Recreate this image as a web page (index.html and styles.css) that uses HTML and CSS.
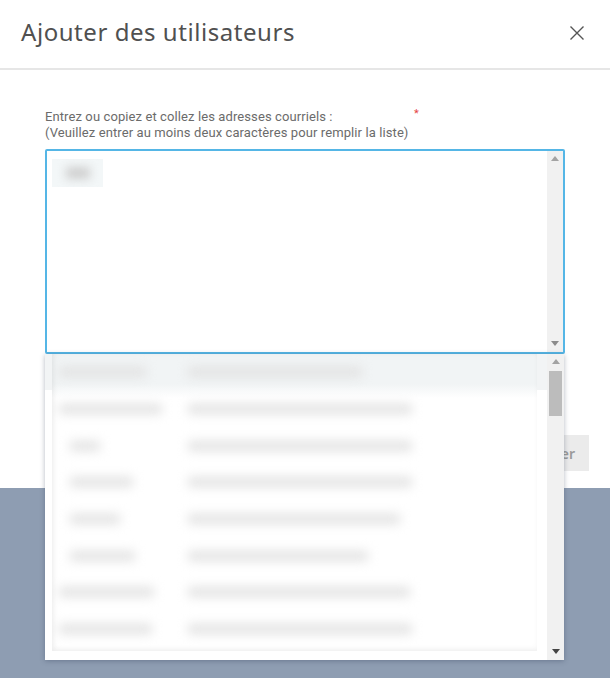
FILE: index.html
```html
<!DOCTYPE html>
<html lang="fr">
<head>
    <meta charset="UTF-8">
    <meta name="viewport" content="width=device-width, initial-scale=1.0">
    <title>Ajouter des utilisateurs</title>
    <link rel="stylesheet" href="styles.css">
</head>
<body>
    <div class="modal">
        <div class="modal-header">
            <h1 class="modal-title">Ajouter des utilisateurs</h1>
            <svg class="close-icon" width="16" height="16" viewBox="0 0 16 16">
                <path d="M1.5 1.5 L14.5 14.5 M14.5 1.5 L1.5 14.5" stroke="#555" stroke-width="1.4" fill="none"/>
            </svg>
        </div>
        <div class="modal-body">
            <div class="field-label">
                <span class="label-line">Entrez ou copiez et collez les adresses courriels :<span class="required">*</span></span>
                <span class="label-line">(Veuillez entrer au moins deux caractères pour remplir la liste)</span>
            </div>
            <div class="email-box">
                <div class="email-content">
                    <div class="chip"><span class="chip-blur"></span></div>
                </div>
                <div class="scrollbar">
                    <span class="arrow-up"></span>
                    <span class="arrow-down"></span>
                </div>
            </div>
        </div>
        <div class="modal-footer">
            <button class="add-btn">Ajouter</button>
        </div>

        <div class="dropdown">
            <div class="user-list">
                <div class="user-row"><span class="blur-bar w87"></span><span class="blur-bar mail w174"></span></div>
                <div class="user-row"><span class="blur-bar w103"></span><span class="blur-bar mail w224"></span></div>
                <div class="user-row"><span class="blur-bar w30 indent"></span><span class="blur-bar mail w224"></span></div>
                <div class="user-row"><span class="blur-bar w63 indent"></span><span class="blur-bar mail w224"></span></div>
                <div class="user-row"><span class="blur-bar w50 indent"></span><span class="blur-bar mail w212"></span></div>
                <div class="user-row"><span class="blur-bar w65 indent"></span><span class="blur-bar mail w180"></span></div>
                <div class="user-row"><span class="blur-bar w95"></span><span class="blur-bar mail w222"></span></div>
                <div class="user-row"><span class="blur-bar w93"></span><span class="blur-bar mail w224"></span></div>
            </div>
            <div class="scrollbar list-scrollbar">
                <span class="arrow-up"></span>
                <span class="thumb"></span>
                <span class="arrow-down dark"></span>
            </div>
        </div>
    </div>
    <div class="backdrop"></div>
</body>
</html>
```

FILE: styles.css
```css
html, body {
    height: 100%;
}

body {
    margin: 0;
    display: flex;
    flex-direction: column;
    overflow: hidden;
    font-family: 'Noto Sans', Arial, sans-serif;
    background-color: #8e9db2;
}

.modal {
    height: 488px;
    flex-shrink: 0;
    display: flex;
    flex-direction: column;
    position: relative;
    background-color: #fff;
}

.backdrop {
    flex: 1;
    background-color: #8e9db2;
}

.modal-header {
    height: 62px;
    padding: 0 25px 6px 21px;
    display: flex;
    justify-content: space-between;
    align-items: center;
    border-bottom: 2px solid #e6e6e6;
}

.modal-title {
    margin: 0;
    font-size: 24px;
    font-weight: 400;
    letter-spacing: 0.55px;
    color: #505050;
}

.close-icon {
    display: block;
    margin-top: 4px;
}

.modal-body {
    padding: 39px 45px 0;
}

.field-label {
    display: flex;
    flex-direction: column;
    font-family: Roboto, Arial, sans-serif;
    font-size: 13px;
    line-height: 16px;
    letter-spacing: 0.1px;
    color: #6b6b6b;
    margin-bottom: 8px;
}

.label-line {
    display: block;
    position: relative;
}

.required {
    position: absolute;
    left: 369px;
    top: -3px;
    color: #e54545;
    font-size: 11px;
}

.email-box {
    height: 205px;
    box-sizing: border-box;
    display: flex;
    border: 2px solid #55b6e6;
    border-radius: 2px;
    background-color: #fff;
}

.email-content {
    flex: 1;
    padding: 8px 5px;
}

.chip {
    width: 51px;
    height: 28px;
    background-color: #f3f7f8;
    display: flex;
    align-items: center;
    justify-content: center;
    overflow: hidden;
}

.chip-blur {
    width: 24px;
    height: 12px;
    background-color: #cfcfcf;
    filter: blur(5px);
}

.scrollbar {
    width: 16px;
    background-color: #f1f1f1;
    display: flex;
    flex-direction: column;
    align-items: center;
    padding: 5px 0 6px;
    box-sizing: border-box;
}

.arrow-up,
.arrow-down {
    width: 0;
    height: 0;
    border-left: 4px solid transparent;
    border-right: 4px solid transparent;
}

.arrow-up {
    border-bottom: 5px solid #a3a3a3;
}

.arrow-down {
    margin-top: auto;
    border-top: 5px solid #8c8c8c;
}

.arrow-down.dark {
    border-top-color: #444;
}

.thumb {
    width: 13px;
    height: 45px;
    margin-top: 7px;
    background-color: #bcbcbc;
}

.modal-footer {
    display: flex;
    justify-content: flex-end;
    padding: 81px 21px 0 0;
}

.add-btn {
    height: 36px;
    width: 84px;
    padding: 0 14px;
    border: none;
    background-color: #ebebeb;
    color: #9a9a9a;
    font-family: inherit;
    font-size: 14px;
    font-weight: 600;
    text-align: right;
}

.dropdown {
    position: absolute;
    left: 45px;
    top: 354px;
    width: 519px;
    height: 306px;
    display: flex;
    background: linear-gradient(#f2f4f5 36px, #fff 36px);
    box-shadow: 0 1px 5px rgba(40, 55, 80, 0.35);
}

.user-list {
    flex: 1;
    display: flex;
    flex-direction: column;
    align-self: flex-start;
    margin: 0 10px 0 7px;
    height: 297px;
    overflow: hidden;
    background: linear-gradient(#f1f4f5 30px, #fff 44px);
    box-shadow: inset 0 -3px 5px rgba(0, 0, 0, 0.04), inset 3px 0 5px rgba(0, 0, 0, 0.04);
}

.user-row {
    height: 36.7px;
    flex-shrink: 0;
    display: flex;
    align-items: center;
    position: relative;
}

.blur-bar {
    height: 10px;
    background-color: #e2e2e2;
    filter: blur(5.5px);
    position: absolute;
    left: 7px;
}

.blur-bar.indent {
    left: 18px;
}

.blur-bar.mail {
    left: 136px;
}

.w30 { width: 30px; }
.w50 { width: 50px; }
.w63 { width: 63px; }
.w65 { width: 65px; }
.w87 { width: 87px; }
.w93 { width: 93px; }
.w95 { width: 95px; }
.w103 { width: 103px; }
.w174 { width: 174px; }
.w180 { width: 180px; }
.w212 { width: 212px; }
.w222 { width: 222px; }
.w224 { width: 224px; }

.list-scrollbar {
    width: 17px;
}
```
